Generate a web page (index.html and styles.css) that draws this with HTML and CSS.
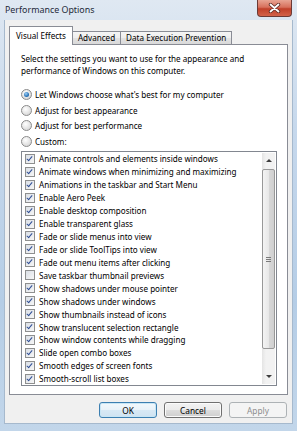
FILE: index.html
```html
<!DOCTYPE html>
<html lang="en">
<head>
    <meta charset="UTF-8">
    <meta name="viewport" content="width=device-width, initial-scale=1.0">
    <title>Performance Options</title>
    <link rel="stylesheet" href="styles.css">
</head>
<body>
    <div class="window">
        <div class="titlebar">
            <span class="title">Performance Options</span>
            <div class="close-btn">
                <svg width="13" height="10" viewBox="0 0 13 10">
                    <path d="M2.5 1.5 L10.5 8.5 M10.5 1.5 L2.5 8.5" stroke="#5a2a24" stroke-width="3.4" stroke-linecap="round"/>
                    <path d="M2.5 1.5 L10.5 8.5 M10.5 1.5 L2.5 8.5" stroke="#ffffff" stroke-width="1.8" stroke-linecap="round"/>
                </svg>
            </div>
        </div>

        <div class="client">
            <div class="tabs">
                <div class="tab active">Visual Effects</div>
                <div class="tab">Advanced</div>
                <div class="tab">Data Execution Prevention</div>
            </div>

            <div class="panel">
                <p class="intro">Select the settings you want to use for the appearance and<br>performance of Windows on this computer.</p>

                <div class="radio-group">
                    <div class="radio checked"><span class="radio-box"></span>Let Windows choose what's best for my computer</div>
                    <div class="radio"><span class="radio-box"></span>Adjust for best appearance</div>
                    <div class="radio"><span class="radio-box"></span>Adjust for best performance</div>
                    <div class="radio"><span class="radio-box"></span>Custom:</div>
                </div>

                <div class="listbox">
                    <ul class="items">
                        <li><span class="check on"></span>Animate controls and elements inside windows</li>
                        <li><span class="check on"></span>Animate windows when minimizing and maximizing</li>
                        <li><span class="check on"></span>Animations in the taskbar and Start Menu</li>
                        <li><span class="check on"></span>Enable Aero Peek</li>
                        <li><span class="check on"></span>Enable desktop composition</li>
                        <li><span class="check on"></span>Enable transparent glass</li>
                        <li><span class="check on"></span>Fade or slide menus into view</li>
                        <li><span class="check on"></span>Fade or slide ToolTips into view</li>
                        <li><span class="check on"></span>Fade out menu items after clicking</li>
                        <li><span class="check"></span>Save taskbar thumbnail previews</li>
                        <li><span class="check on"></span>Show shadows under mouse pointer</li>
                        <li><span class="check on"></span>Show shadows under windows</li>
                        <li><span class="check on"></span>Show thumbnails instead of icons</li>
                        <li><span class="check on"></span>Show translucent selection rectangle</li>
                        <li><span class="check on"></span>Show window contents while dragging</li>
                        <li><span class="check on"></span>Slide open combo boxes</li>
                        <li><span class="check on"></span>Smooth edges of screen fonts</li>
                        <li><span class="check on"></span>Smooth-scroll list boxes</li>
                    </ul>
                    <div class="scrollbar">
                        <div class="arrow up"></div>
                        <div class="track">
                            <div class="thumb"><span class="grip"></span></div>
                        </div>
                        <div class="arrow down"></div>
                    </div>
                </div>
            </div>

            <div class="button-row">
                <button class="btn default">OK</button>
                <button class="btn">Cancel</button>
                <button class="btn" disabled>Apply</button>
            </div>
        </div>
    </div>
</body>
</html>
```

FILE: styles.css
```css
body {
    margin: 0;
    font-family: "Noto Sans", "Open Sans", sans-serif;
    font-size: 8.1px;
    color: #000;
    background-color: #fff;
}

.window {
    width: 297px;
    height: 431px;
    box-sizing: border-box;
    padding: 0 4px 7px 4px;
    display: flex;
    flex-direction: column;
    background: linear-gradient(#dfe8f2, #c6d8ec 30%, #b5cde6 70%, #c2d6ea);
}

.titlebar {
    height: 20px;
    flex: none;
    position: relative;
    display: flex;
    align-items: center;
    padding-left: 1px;
}

.title {
    font-size: 8.9px;
    color: #1e2a38;
    margin-top: -1px;
}

.close-btn {
    position: absolute;
    top: 0;
    right: 1px;
    width: 35px;
    height: 17px;
    box-sizing: border-box;
    border: 1px solid #6b3a36;
    border-top: none;
    border-radius: 0 0 4px 4px;
    background: linear-gradient(#e8a493, #d7705c 45%, #c0402a 55%, #d2634a);
    display: flex;
    align-items: center;
    justify-content: center;
}

.client {
    flex: 1;
    background-color: #f0f0f0;
    padding: 7px 4px 0 4px;
    display: flex;
    flex-direction: column;
    border: 1px solid #a6b9cd;
    border-top: none;
}

/* tabs */
.tabs {
    display: flex;
    align-items: flex-end;
    height: 17px;
    position: relative;
    z-index: 1;
}

.tab {
    height: 12px;
    line-height: 12px;
    padding: 0 5px;
    border: 1px solid #898c95;
    border-bottom: none;
    margin-left: -1px;
    background: linear-gradient(#f5f5f5, #eeeeee 50%, #e3e3e3 51%, #d9d9d9);
    white-space: nowrap;
}

.tab:first-child {
    margin-left: 0;
}

.tab.active {
    height: 18px;
    line-height: 17px;
    margin-bottom: -1px;
    background: #fff;
    padding: 0 6px;
}

.panel {
    height: 351px;
    box-sizing: border-box;
    border: 1px solid #898c95;
    background-color: #fff;
    padding: 8px 10px 0 11px;
}

.intro {
    margin: 0;
    line-height: 12px;
}

.radio-group {
    margin-top: 10px;
    display: flex;
    flex-direction: column;
}

.radio {
    height: 15.6px;
    display: flex;
    align-items: center;
}

.radio-box {
    width: 9px;
    height: 9px;
    border: 1px solid #8b8b8b;
    border-radius: 50%;
    margin-right: 3px;
    background: radial-gradient(circle at 40% 35%, #ffffff, #dcdcdc 70%, #c9c9c9);
    position: relative;
}

.radio.checked .radio-box::after {
    content: "";
    position: absolute;
    left: 2px;
    top: 2px;
    width: 5px;
    height: 5px;
    border-radius: 50%;
    background: radial-gradient(circle at 40% 35%, #9fd0f5, #2a74b8 60%, #134d8c);
}

/* list of effects */
.listbox {
    margin-top: 2px;
    height: 235px;
    box-sizing: border-box;
    border: 1px solid #828790;
    display: flex;
}

.items {
    flex: 1;
    list-style: none;
    margin: 0;
    padding: 0 0 0 3px;
}

.items li {
    height: 12.94px;
    display: flex;
    align-items: center;
    white-space: nowrap;
}

.check {
    width: 8px;
    height: 8px;
    border: 1px solid #8e8f8f;
    margin-right: 4px;
    background: linear-gradient(135deg, #dadfe6, #f6f6f6);
    position: relative;
}

.check.on::after {
    content: "";
    position: absolute;
    left: 2px;
    top: 0;
    width: 2px;
    height: 5px;
    border: solid #2f4f96;
    border-width: 0 1.6px 1.6px 0;
    transform: rotate(40deg);
}

.scrollbar {
    width: 13px;
    display: flex;
    flex-direction: column;
    background: linear-gradient(90deg, #e4e4e4, #f2f2f2 30%, #f2f2f2);
    margin: 1px 1px 1px 0;
}

.arrow {
    height: 15px;
    flex: none;
    display: flex;
    align-items: center;
    justify-content: center;
}

.arrow::before {
    content: "";
    border-left: 3px solid transparent;
    border-right: 3px solid transparent;
}

.arrow.up::before {
    border-bottom: 3px solid #3c3c3c;
}

.arrow.down::before {
    border-top: 3px solid #3c3c3c;
}

.track {
    flex: 1;
    padding-top: 1px;
}

.thumb {
    height: 180px;
    box-sizing: border-box;
    border: 1px solid #989898;
    border-radius: 2px;
    background: linear-gradient(90deg, #f4f4f4, #e8e8e8 50%, #d8d8d8 51%, #d0d0d0);
    display: flex;
    align-items: center;
    justify-content: center;
}

.grip {
    width: 5px;
    height: 5px;
    background: repeating-linear-gradient(#7a7a7a 0 1px, transparent 1px 2px);
}

/* dialog buttons */
.button-row {
    display: flex;
    justify-content: flex-end;
    gap: 7px;
    margin-top: 7px;
    padding-right: 1px;
}

.btn {
    width: 58px;
    height: 16px;
    padding: 0;
    font-family: inherit;
    font-size: 8.3px;
    color: #000;
    border: 1px solid #707070;
    border-radius: 3px;
    background: linear-gradient(#f2f2f2, #ebebeb 50%, #dddddd 51%, #cfcfcf);
    box-shadow: inset 0 0 0 1px #fbfbfb;
}

.btn.default {
    border-color: #3c7fb1;
    box-shadow: inset 0 0 0 1px #c8e6f5;
    background: linear-gradient(#f2f8fc, #e8f2f9 50%, #d8e9f5 51%, #cfe3f1);
}

.btn:disabled {
    color: #8d8d8d;
    border-color: #adb2b5;
    background: #f4f4f4;
    box-shadow: none;
}
```
